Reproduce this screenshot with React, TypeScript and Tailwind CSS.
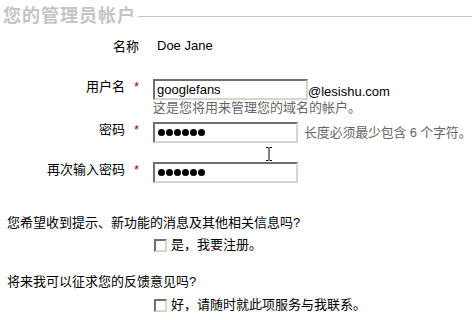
import React from 'react';

const font = { fontFamily: '"Liberation Sans", "Noto Sans CJK SC", sans-serif' };

const inputCls =
  'h-[21px] border-2 border-t-[#6f6f6f] border-l-[#6f6f6f] border-b-[#d8d4cc] border-r-[#d8d4cc] bg-white px-[2px] text-[13px] text-black outline-none';

const boxCls =
  'mr-[4px] h-[13px] w-[13px] shrink-0 border-2 border-t-[#6f6f6f] border-l-[#6f6f6f] border-b-[#d8d4cc] border-r-[#d8d4cc] bg-white';

function Label({ text, required }: { text: string; required?: boolean }) {
  return (
    <div className="w-[139px] shrink-0 pt-[1px] text-right text-[13px] leading-[14px] whitespace-nowrap text-black">
      {text}
      {required && <span className="ml-[9px] text-[#990033]">*</span>}
    </div>
  );
}

function Dots() {
  return (
    <div className={`${inputCls} flex items-center gap-[1px] pl-[3px]`}>
      {[0, 1, 2, 3, 4, 5].map((i) => (
        <span key={i} className="block h-[7px] w-[7px] rounded-full bg-black" />
      ))}
    </div>
  );
}

export default function App() {
  return (
    <div className="relative h-[320px] w-[472px] overflow-hidden bg-white" style={font}>
      {/* section heading */}
      <div className="flex items-center pl-[3px] pt-[5px]">
        <span className="text-[18px] leading-[22px] font-bold tracking-[1px] text-[#c4c4c4]">您的管理员帐户</span>
        <div className="ml-[2px] h-[1px] flex-1 bg-[#c4c4c4]" />
      </div>

      {/* name */}
      <div className="mt-[12px] flex">
        <Label text="名称" />
        <div className="pl-[18px] text-[13px] leading-[14px] text-black">Doe Jane</div>
      </div>

      {/* username */}
      <div className="mt-[25px] flex">
        <Label text="用户名" required />
        <div className="pl-[14px]">
          <div className="flex items-end">
            <input readOnly value="googlefans" className={`${inputCls} w-[155px]`} style={font} />
            <span className="mb-[1px] text-[13px] leading-[14px] text-black">@lesishu.com</span>
          </div>
          <div className="mt-[1px] text-[13px] leading-[14px] whitespace-nowrap text-[#666666]">这是您将用来管理您的域名的帐户。</div>
        </div>
      </div>

      {/* password */}
      <div className="mt-[7px] flex items-start">
        <Label text="密码" required />
        <div className="flex items-center pl-[14px]">
          <div className="w-[145px] shrink-0">
            <Dots />
          </div>
          <span className="ml-[6px] text-[13px] leading-[14px] tracking-[-0.2px] whitespace-nowrap text-[#666666]">长度必须最少包含 6 个字符。</span>
        </div>
      </div>

      {/* confirm */}
      <div className="mt-[19px] flex items-start">
        <Label text="再次输入密码" required />
        <div className="pl-[14px]">
          <div className="w-[145px]">
            <Dots />
          </div>
        </div>
      </div>

      {/* opt-ins */}
      <div className="mt-[33px] pl-[7px] text-[13px] leading-[14px] text-black">您希望收到提示、新功能的消息及其他相关信息吗?</div>
      <div className="mt-[8px] flex items-center pl-[154px] text-[13px] leading-[14px] text-black">
        <span className={boxCls} />
        是，我要注册。
      </div>

      <div className="mt-[23px] pl-[7px] text-[13px] leading-[14px] text-black">将来我可以征求您的反馈意见吗?</div>
      <div className="mt-[9px] flex items-center pl-[154px] text-[13px] leading-[14px] text-black">
        <span className={boxCls} />
        好，请随时就此项服务与我联系。
      </div>

      {/* mouse cursor */}
      <svg className="absolute left-[265px] top-[147px]" width="8" height="14" viewBox="0 0 8 14">
        <path d="M1 0.5h2.5M4.5 0.5H7M1 13.5h2.5M4.5 13.5H7M4 1v12" stroke="#000" strokeWidth="1" fill="none" />
      </svg>
    </div>
  );
}
